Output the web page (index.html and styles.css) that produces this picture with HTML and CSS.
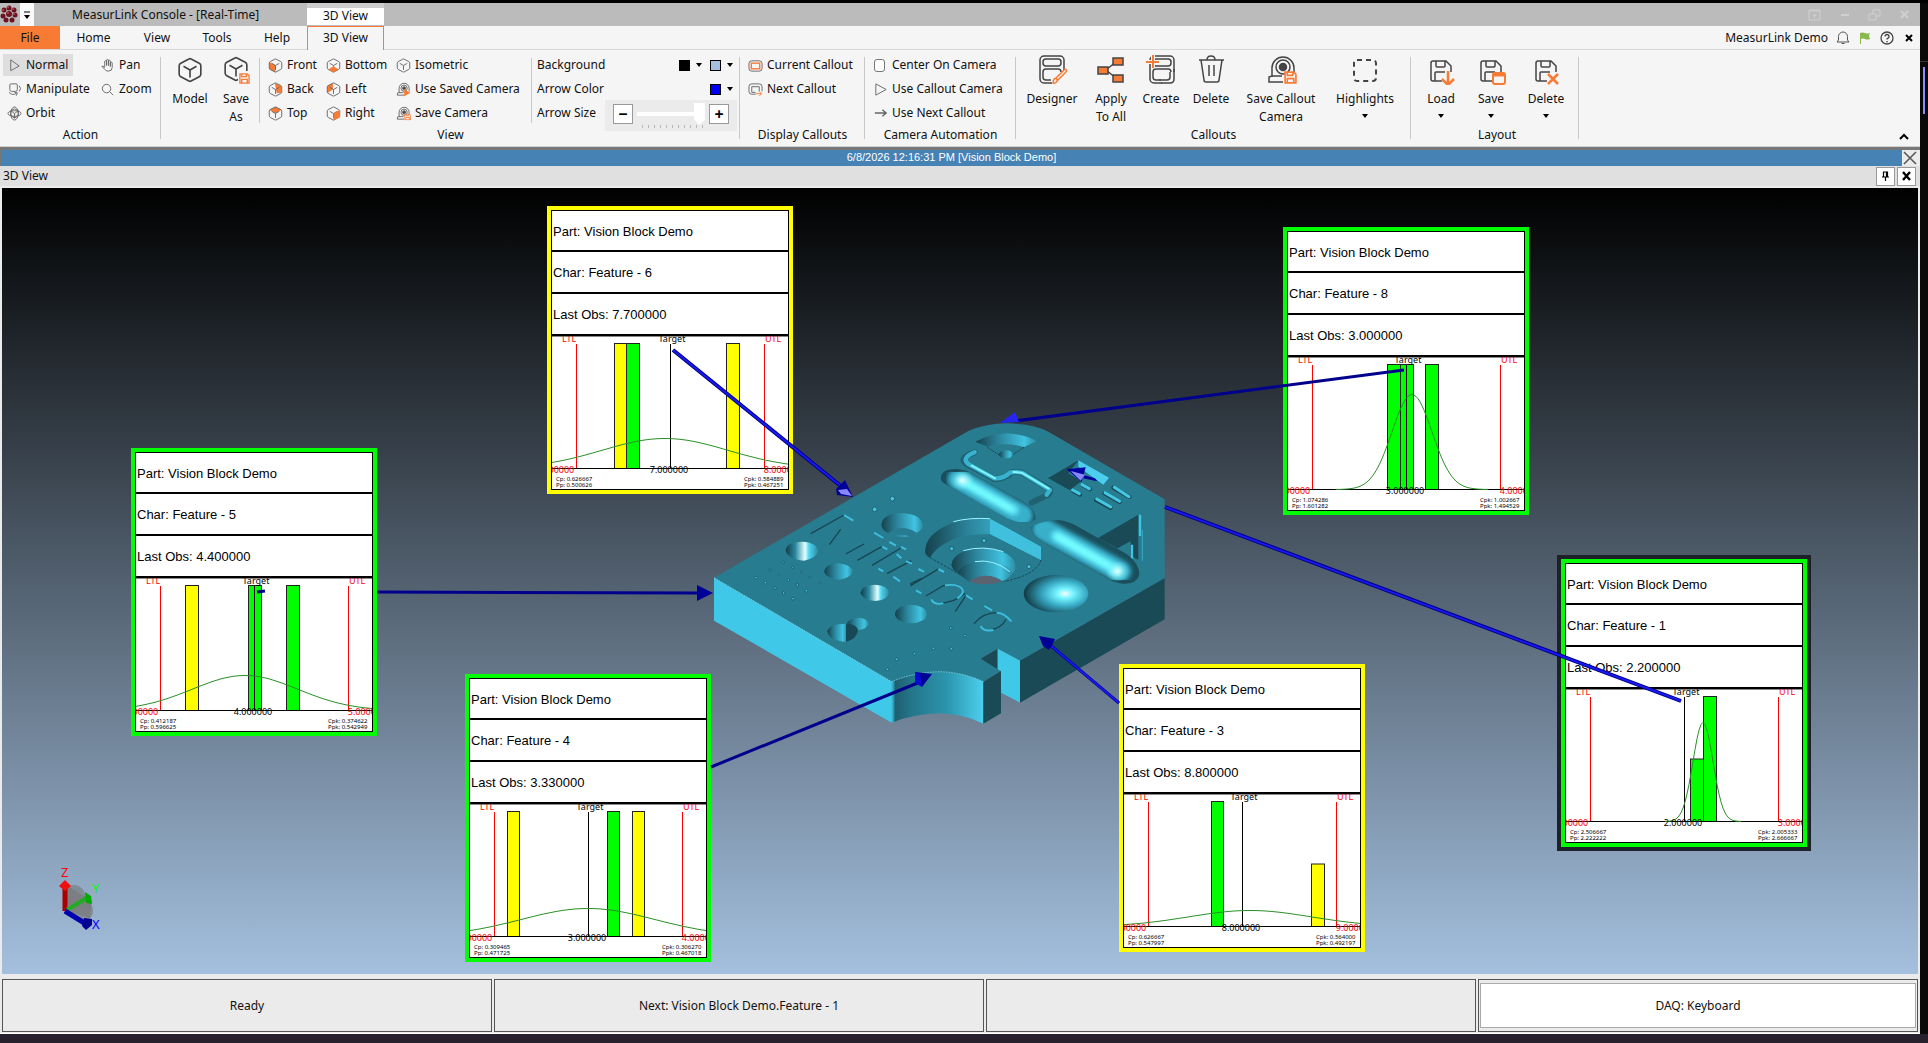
FILE: index.html
```html
<!DOCTYPE html>
<html lang="en">
<head>
<meta charset="utf-8">
<title>MeasurLink Console - [Real-Time]</title>
<link rel="stylesheet" href="styles.css">
</head>
<body>
<svg class="defs" aria-hidden="true">
  <symbol id="cube" viewBox="0 0 24 24"><path d="M11 1.8Q12 1.2 13 1.8L20.500 5.800Q22 6.600 22 8V16Q22 17.400 20.500 18.200L13 22.200Q12 22.800 11 22.200L3.500 18.200Q2 17.400 2 16V8Q2 6.600 3.500 5.800Z"/><path d="M6 8.500L12 12L18 8.500M12 12V19"/></symbol>
  <symbol id="camera" viewBox="0 0 24 24"><path d="M5 17V10a8 8 0 0 1 16 0v5M3 17h9M3 17l-1 4h11"/><circle cx="13" cy="10" r="5"/><circle cx="13" cy="10" r="2.500" fill="#444"/></symbol>
  <symbol id="disk" viewBox="0 0 24 24"><path d="M13 22H4a2 2 0 0 1-2-2V4a2 2 0 0 1 2-2h13l5 5v6M7 2v5a1 1 0 0 0 1 1h7a1 1 0 0 0 1-1V2M6 22v-8a1 1 0 0 1 1-1h9"/></symbol>
  <symbol id="form" viewBox="0 0 26 30"><path d="M13 28H5a4 4 0 0 1-4-4V5a4 4 0 0 1 4-4h16a4 4 0 0 1 4 4v12"/><rect x="4" y="4" width="18" height="7" rx="3"/><path d="M12 25H7a3 3 0 0 1-3-3v-5a3 3 0 0 1 3-3h12a3 3 0 0 1 3 3"/></symbol>
  <symbol id="floppy" viewBox="0 0 12 12"><path d="M1 1h8l2 2v8H1zM3 1v3h5V1M3 11V7h6v4" fill="#f5f5f5" stroke="#f77b35" stroke-width="1.500"/></symbol>
</svg>
<div class="app">
  <header class="titlebar">
    <svg class="logo" viewBox="0 0 18 18"><g fill="#6b1320"><circle cx="9" cy="3" r="2.500"/><circle cx="14" cy="5" r="2.500"/><circle cx="15" cy="10" r="2.500"/><circle cx="12" cy="15" r="2.500"/><circle cx="6" cy="15" r="2.500"/><circle cx="3" cy="11" r="2.500"/><circle cx="4" cy="5" r="2.500"/><circle cx="9" cy="9" r="3"/></g><g fill="#c0455a"><circle cx="8" cy="2" r="1"/><circle cx="13" cy="4" r="1"/><circle cx="14" cy="9" r="1"/><circle cx="8" cy="8" r="1"/><circle cx="3" cy="5" r="1"/></g></svg>
    <button class="quick" aria-label="Quick access"><svg viewBox="0 0 14 22"><path d="M4 8h6" stroke="#000"/><path d="M4 11h6l-3 4z" fill="#000"/></svg></button>
    <h1 class="title">MeasurLink Console - [Real-Time]</h1>
    <span class="context">3D View</span>
    <div class="winbtns">
      <button aria-label="Ribbon options"><svg viewBox="0 0 14 14"><path d="M1 2h11v10H1zM1 3h11M6.500 10V6M4.500 8l2-2 2 2"/></svg></button>
      <button aria-label="Minimize"><svg viewBox="0 0 14 14"><path d="M3 7h8" stroke-width="2"/></svg></button>
      <button aria-label="Restore"><svg viewBox="0 0 14 14"><path d="M1 6h7v6H1zM5 6V2h7v6H8"/></svg></button>
      <button aria-label="Close"><svg viewBox="0 0 14 14"><path d="M3 3l7 7M10 3l-7 7" stroke-width="2"/></svg></button>
    </div>
  </header>
  <nav class="tabs">
    <a class="tab file" href="#">File</a><a class="tab" href="#">Home</a><a class="tab" href="#">View</a><a class="tab" href="#">Tools</a><a class="tab" href="#">Help</a><a class="tab active" href="#">3D View</a>
    <div class="account"><span>MeasurLink Demo</span>
      <button aria-label="Notifications"><svg viewBox="0 0 14 14"><path d="M1 11h12l-1.500-2V5.500a4.500 4.500 0 0 0-9 0V9zM5.500 12.500h3" fill="none" stroke="#555"/></svg></button>
      <button aria-label="Status flag"><svg viewBox="0 0 14 14"><path d="M2 2q3-1 5 0t5 0l-1 3 1 3q-3 1-5 0T3 8v5H2z" fill="#8bb84a"/></svg></button>
      <button aria-label="Help"><svg viewBox="0 0 14 14"><circle cx="7" cy="7" r="6" fill="none" stroke="#444" stroke-width="1.300"/><path d="M5 5.500a2 2 0 1 1 3 1.700q-1 .5-1 1.300M7 10v1.300" fill="none" stroke="#444" stroke-width="1.400"/></svg></button>
      <button aria-label="Close view"><svg viewBox="0 0 14 14"><path d="M4 4l6 6M10 4l-6 6" stroke="#000" stroke-width="2"/></svg></button>
    </div>
  </nav>
  <section class="ribbon">
    <div class="group action">
      <div class="body">
        <div class="col c-action">
          <button class="cmd on"><svg class="ic" viewBox="0 0 16 16"><path d="M4 2l9 6.500-9 5z"/></svg>Normal</button>
          <button class="cmd"><svg class="ic" viewBox="0 0 16 16"><path d="M4 2h6q1 0 1 1v5q0 2-2 2H5q-2 0-2-2V3q0-1 1-1zM13 4q3 3 0 6M2 11q4 4 8 1M8 11l3 .5-1 3"/></svg>Manipulate</button>
          <button class="cmd"><svg class="ic" viewBox="0 0 16 16"><path d="M8 3l4 2v5l-4 3-4-3V5zM4 5l4 3 4-3M8 8v5"/><ellipse cx="8" cy="8" rx="7" ry="3"/><ellipse cx="8" cy="8" rx="4" ry="7"/></svg>Orbit</button>
        </div>
        <div class="col c-pan">
          <button class="cmd"><svg class="ic" viewBox="0 0 16 16"><path d="M5 9V3.500q1-1 2 0V8 2q1-1 2 0v6-5q1-1 2 0v6-4q1-1 2 0v5q0 4-4 4-3 0-4-2L2 9q1-1 3 1z"/></svg>Pan</button>
          <button class="cmd"><svg class="ic" viewBox="0 0 16 16"><circle cx="7" cy="7" r="4.500"/><path d="M10 10l4 4"/></svg>Zoom</button>
        </div>
      </div>
      <h2>Action</h2>
    </div>
    <div class="group view">
      <div class="body">
        <div class="bigs g-model">
          <button class="big"><svg viewBox="0 0 32 32"><use href="#cube" x="3" y="4" width="26" height="26"/></svg>Model</button>
          <button class="big"><svg viewBox="0 0 32 32"><use href="#cube" x="3" y="3" width="26" height="26"/><path d="M18 18h12v14H18z" fill="#f5f5f5" stroke="none"/><use href="#floppy" x="19" y="20" width="11" height="11"/></svg><span>Save<br>As</span></button>
        </div>
        <div class="col c-front">
          <button class="cmd"><svg class="ic" viewBox="0 0 24 24"><path class="o" d="M2 6l10 6v11L2 18z"/><use href="#cube"/></svg>Front</button>
          <button class="cmd"><svg class="ic" viewBox="0 0 24 24"><path class="o" d="M11 2l10 4v11l-7 1z"/><use href="#cube"/></svg>Back</button>
          <button class="cmd"><svg class="ic" viewBox="0 0 24 24"><path class="o" d="M12 1l10 5-10 6L2 6z"/><use href="#cube"/></svg>Top</button>
        </div>
        <div class="col c-bottom">
          <button class="cmd"><svg class="ic" viewBox="0 0 24 24"><use href="#cube"/><path class="o" d="M12 13l8 5-8 5-8-5z"/></svg>Bottom</button>
          <button class="cmd"><svg class="ic" viewBox="0 0 24 24"><path class="o" d="M2 6l9-4v10l-9 6z"/><use href="#cube"/></svg>Left</button>
          <button class="cmd"><svg class="ic" viewBox="0 0 24 24"><use href="#cube"/><path class="o" d="M12 12l10-6v12l-10 5z"/></svg>Right</button>
        </div>
        <div class="col c-iso">
          <button class="cmd"><svg class="ic" viewBox="0 0 24 24"><use href="#cube"/></svg>Isometric</button>
          <button class="cmd"><svg class="ic" viewBox="0 0 24 24"><use href="#camera"/><path class="o" d="M13 11l10 6-10 6z"/></svg>Use Saved Camera</button>
          <button class="cmd"><svg class="ic" viewBox="0 0 24 24"><use href="#camera"/><use href="#floppy" x="13" y="12" width="11" height="11"/></svg>Save Camera</button>
        </div>
        <div class="col c-colors">
          <div class="row"><span class="lbl">Background</span><button class="swatch black" aria-label="Background top color"></button><i class="caret"></i><button class="swatch sky" aria-label="Background bottom color"></button><i class="caret"></i></div>
          <div class="row"><span class="lbl">Arrow Color</span><button class="swatch blue" aria-label="Arrow color"></button><i class="caret"></i></div>
          <div class="row"><label class="lbl" for="size">Arrow Size</label>
            <div class="slider"><button aria-label="Smaller">−</button><div class="track"><input id="size" type="range" min="0" max="10" value="10"><div class="ticks"></div></div><button aria-label="Larger">+</button></div></div>
        </div>
      </div>
      <h2>View</h2>
    </div>
    <div class="group display">
      <div class="body"><div class="col">
        <button class="cmd"><svg class="ic" viewBox="0 0 16 16"><rect x="1" y="3" width="14" height="11" rx="3"/><rect x="3.500" y="5.500" width="9" height="6" stroke="#f77b35" stroke-width="1.500"/></svg>Current Callout</button>
        <button class="cmd"><svg class="ic" viewBox="0 0 16 16"><path d="M8 13H4q-3 0-3-3V5q0-3 3-3h8q3 0 3 3v5M8 11H4V5h8v5"/><path d="M8 12.500h6M12 10l2.500 2.500L12 15" stroke="#f77b35"/></svg>Next Callout</button>
      </div></div>
      <h2>Display Callouts</h2>
    </div>
    <div class="group auto">
      <div class="body"><div class="col">
        <label class="cmd"><input class="check" type="checkbox">Center On Camera</label>
        <button class="cmd"><svg class="ic" viewBox="0 0 16 16"><path d="M3 2l11 6-11 6z"/></svg>Use Callout Camera</button>
        <button class="cmd"><svg class="ic" viewBox="0 0 16 16"><path d="M2 7.500h12M10 4l4 3.500-4 3.500" stroke-width="1.500"/></svg>Use Next Callout</button>
      </div></div>
      <h2>Camera Automation</h2>
    </div>
    <div class="group callouts">
      <div class="body"><div class="bigs g-callouts">
        <button class="big"><svg viewBox="0 0 32 32"><use href="#form" x="3" y="2" width="26" height="30"/><path d="M17 30q0-4 3-5l9-9q3 1 0 4l-8 8q-1 3-4 2zM20 25l2 3" fill="#f5f5f5" stroke="#f77b35"/></svg>Designer</button>
        <button class="big"><svg viewBox="0 0 32 32"><path d="M11 17L22 8M11 17l11 9"/><g fill="#f77b35"><rect x="3" y="14" width="10" height="7"/><rect x="18" y="5" width="10" height="7"/><rect x="18" y="22" width="10" height="7"/></g></svg><span>Apply<br>To All</span></button>
        <button class="big"><svg viewBox="0 0 32 32"><use href="#form" x="4" y="2" width="26" height="30"/><path d="M16 30h9q4 0 4-4V16M14 27h8q3 0 3-3v-5"/><path d="M2 9h13M8 2v13" stroke="#f5f5f5" stroke-width="4"/><path d="M1 9h13M8 2v13" stroke="#f77b35" stroke-width="2"/></svg>Create</button>
        <button class="big"><svg viewBox="0 0 32 32"><path d="M4 7h25M6 7l3 20q0 2 2 2h11q2 0 2-2l3-20M12 7q0-4 4-4t4 4M14 12v11M19 12v11"/></svg>Delete</button>
        <button class="big"><svg viewBox="0 0 32 32"><path d="M7 24V15a11 11 0 0 1 22 0v4M7 23l-3 1v5h14M7 23h10"/><circle cx="18" cy="14" r="7"/><circle cx="18" cy="14" r="3.500" fill="#444"/><use href="#floppy" x="19" y="18" width="13" height="13"/></svg><span>Save Callout<br>Camera</span></button>
        <button class="big drop"><svg viewBox="0 0 32 32"><rect x="5" y="7" width="22" height="21" rx="3" stroke-dasharray="5 4" stroke-width="2"/></svg>Highlights<i class="caret"></i></button>
      </div></div>
      <h2>Callouts</h2>
    </div>
    <div class="group layout">
      <div class="body"><div class="bigs g-layout">
        <button class="big drop"><svg viewBox="0 0 32 32"><use href="#disk" x="4" y="6" width="24" height="24"/><path d="M23 18v13M17 26l6 6 6-6" stroke="#f77b35" stroke-width="2.500"/></svg>Load<i class="caret"></i></button>
        <button class="big drop"><svg viewBox="0 0 32 32"><use href="#disk" x="4" y="6" width="24" height="24"/><rect x="18" y="20" width="12" height="11" rx="2" fill="#f5f5f5" stroke="#f77b35" stroke-width="2"/><path d="M18 22h12" stroke="#f77b35" stroke-width="3"/></svg>Save<i class="caret"></i></button>
        <button class="big drop"><svg viewBox="0 0 32 32"><use href="#disk" x="4" y="6" width="24" height="24"/><path d="M18 21l10 10M28 21L18 31" stroke="#f77b35" stroke-width="2.500"/></svg>Delete<i class="caret"></i></button>
      </div></div>
      <h2>Layout</h2>
    </div>
    <button class="collapse" aria-label="Collapse ribbon"><svg viewBox="0 0 12 12"><path d="M2 8l4-4 4 4" fill="none" stroke="#000" stroke-width="2"/></svg></button>
  </section>
  <div class="docbar"><span>6/8/2026 12:16:31 PM [Vision Block Demo]</span><button aria-label="Close document"><svg viewBox="0 0 16 16"><path d="M2 2l12 12M14 2L2 14" stroke="#555" stroke-width="1.500"/></svg></button></div>
  <div class="panelbar"><span>3D View</span>
    <button aria-label="Pin"><svg viewBox="0 0 16 16"><path d="M5 9h7M6.500 9V4h4v5M9.500 4v5M8.500 9v4" fill="none" stroke="#000" stroke-width="1.200"/></svg></button>
    <button aria-label="Close panel"><svg viewBox="0 0 16 16"><path d="M5 4l7 8M12 4l-7 8" stroke="#000" stroke-width="2.400"/></svg></button></div>
  <main class="viewport">
    <svg class="model" viewBox="0 0 1440 990">
      <defs>
        <linearGradient id="cove"><stop offset="0" stop-color="#40c8e8"/><stop offset=".04" stop-color="#1d5f70"/><stop offset=".2" stop-color="#247488"/><stop offset=".6" stop-color="#2b95ae"/><stop offset="1" stop-color="#4ccfee"/></linearGradient>
        <linearGradient id="bore"><stop offset="0" stop-color="#16414c"/><stop offset=".35" stop-color="#2a8097"/><stop offset=".8" stop-color="#40c4e2"/><stop offset="1" stop-color="#2d8ba2"/></linearGradient>
        <linearGradient id="cone"><stop offset="0" stop-color="#123a45"/><stop offset=".3" stop-color="#2a8aa2"/><stop offset=".6" stop-color="#e4ffff"/><stop offset=".72" stop-color="#4fd6f2"/><stop offset="1" stop-color="#2d8ba2"/></linearGradient>
        <radialGradient id="ball" cx=".64" cy=".5" r=".62"><stop offset="0" stop-color="#efffff"/><stop offset=".22" stop-color="#73f3ff"/><stop offset=".55" stop-color="#37a9c4"/><stop offset="1" stop-color="#143f4a"/></radialGradient>
        <radialGradient id="shine"><stop offset="0" stop-color="#e8ffff"/><stop offset="1" stop-color="#76ffff" stop-opacity="0"/></radialGradient>
        <filter id="soft" x="-20%" y="-20%" width="140%" height="140%"><feGaussianBlur stdDeviation="7"/></filter>
        <clipPath id="pillA"><path d="M722 205Q724 177 768 177Q795 178 815 190L975 278Q1006 296 1007 327Q990 341 950 335L920 326L760 235Q722 220 722 205Z"/></clipPath>
        <clipPath id="pillB"><path d="M992 352Q1010 335 1075 330Q1105 334 1130 348L1280 432Q1320 462 1318 495Q1310 522 1270 521Q1248 520 1225 507L1040 404Q995 378 992 352Z"/></clipPath>
      </defs>
      <path fill="#287c90" d="M42 503L805 63Q860 40 920 40Q1000 42 1045 65L1394 268V505L960 752L893 716L842 746L903 783L850 815Q790 787 720 785Q640 787 575 815Z"/>
      <path fill="#40c8e8" d="M42 503L575 815V938L42 632Z"/>
      <path fill="url(#cove)" d="M575 815Q640 787 720 785Q790 787 850 815V941Q790 912 720 910Q640 912 575 938Z"/>
      <path fill="#194a56" d="M850 815L903 783V910L850 941ZM960 752L1394 505V628L960 878ZM842 746L893 716V778Z"/>
      <path fill="#40c8e8" d="M893 716L960 752V878L903 848V783L893 778Z"/>
      <path fill="none" stroke="#7fe6f8" stroke-width="2" stroke-dasharray="5 3" d="M42 503L575 815Q640 787 720 785Q790 787 850 815"/>
      <path fill="url(#bore)" d="M826 95Q870 72 920 70Q980 74 1010 94L972 111Q915 95 862 110Z"/><path fill="none" stroke="#174855" stroke-width="3" stroke-dasharray="6 3" d="M862 112L905 140M972 112L930 140"/><ellipse cx="918" cy="133" rx="21" ry="12" fill="url(#bore)"/>
      <g fill="none" stroke-linecap="round" stroke-linejoin="round"><path d="M824 127Q770 145 803 164L883 207Q910 208 935 187Q952 182 970 190L1050 238Q1052 252 1040 256L995 278" stroke="#1f6272" stroke-width="18"/><path d="M824 127Q780 145 808 164L883 205Q910 207 930 188Q950 182 970 190L1050 240L1040 254" stroke="#38b2ce" stroke-width="13"/><path d="M815 167L885 205M940 186L965 188L1046 236" stroke="#7ff6ff" stroke-width="6"/></g>
      <g clip-path="url(#pillA)"><path fill="#194f5c" d="M700 160H1020V350H700Z"/><g fill="none" filter="url(#soft)" stroke-linecap="round"><path d="M776 208L965 316" stroke="#38b0cc" stroke-width="66"/><path d="M786 212L940 300" stroke="#5fe9fb" stroke-width="30"/><path d="M800 222L930 296" stroke="#76ffff" stroke-width="16"/></g><ellipse cx="787" cy="211" rx="36" ry="30" fill="url(#shine)"/></g>
      <path fill="#194a56" d="M1194 384L1315 314V450L1280 430Z"/>
      <path fill="#287c90" d="M1252 415L1292 394V440Z"/>
      <path fill="none" stroke="#42c4e1" stroke-width="7" d="M1320 314V378M1296 404V446"/><path fill="none" stroke="#42c4e1" stroke-width="2" d="M1327 360V452"/>
      <g clip-path="url(#pillB)"><path fill="#194f5c" d="M980 320H1330V530H980Z"/><g fill="none" filter="url(#soft)" stroke-linecap="round"><path d="M1030 358L1260 484" stroke="#38b0cc" stroke-width="66"/><path d="M1070 378L1250 480" stroke="#5fe9fb" stroke-width="32"/><path d="M1075 382L1225 466" stroke="#76ffff" stroke-width="18"/></g><ellipse cx="1252" cy="484" rx="36" ry="32" fill="url(#shine)"/></g>
      <ellipse cx="1068" cy="551" rx="97" ry="56" fill="url(#ball)"/>
      <path fill="url(#bore)" d="M676 428Q672 375 750 342Q810 320 870 326L1023 410V450Q1005 440 870 372Q790 372 750 392Q705 414 690 443Q678 438 676 428Z"/><path fill="none" stroke="#174855" stroke-width="3" stroke-dasharray="8 4" d="M690 443L800 505M1023 450Q1010 495 910 515"/>
      <path fill="#40c0dd" d="M870 326L1023 410V450L870 372Z"/>
      <path fill="url(#bore)" d="M754 465Q760 418 850 414Q945 422 947 472Q945 487 934 491Q920 455 855 452Q790 455 770 487Q758 480 754 465Z"/><path fill="url(#bore)" d="M770 487Q792 454 855 452Q925 456 936 489Q935 500 908 513Q860 482 808 516Z"/><path fill="#5b6270" d="M806 514Q857 480 907 514Q857 532 806 514Z"/><path fill="none" stroke="#9af3ff" stroke-width="3" d="M760 335Q810 322 870 326M790 422Q850 405 910 425M825 455Q880 445 930 485"/>
      <path fill="url(#bore)" d="M544 345Q548 310 605 309Q665 312 669 347Q665 362 650 368Q605 340 565 369Q545 360 544 345ZM580 378Q605 370 628 379Q605 384 580 378Z"/>
      <path fill="url(#cone)" d="M257 423Q258 396 306 395Q352 397 354 424Q350 445 312 452Q265 447 257 423Z"/><path fill="url(#cone)" d="M481 548Q485 525 524 524Q564 526 567 548Q562 570 525 573Q488 570 481 548Z"/>
      <path fill="url(#bore)" d="M372 485Q376 461 415 460Q455 463 458 486Q452 503 418 509Q380 506 372 485Z"/>
      <ellipse cx="633" cy="612" rx="48" ry="28" fill="url(#bore)"/>
      <path fill="url(#bore)" d="M382 664Q385 642 440 641L438 695H430Q386 690 382 664Z"/><path fill="#174855" d="M438 643L474 640V661Q470 688 438 695Z"/><path fill="url(#bore)" d="M440 641Q445 624 480 623Q506 628 506 642Q500 658 474 661Q468 640 440 641Z"/>
      <path fill="#194a56" d="M1045 204L1135 151L1105 190L1145 213L1110 240Z"/><path fill="#4ccfee" d="M1135 151L1227 203L1210 224L1135 170Z"/><path fill="none" stroke="#174855" stroke-width="2" stroke-dasharray="6 3" d="M1045 204L1110 240"/>
      <g stroke="#174855" stroke-width="12" stroke-linecap="round"><path d="M1120 243l20 11M1148 226l22 12M1188 270l44 24M1213 250l46 26M1240 233l48 28"/></g>
      <g stroke="#43c8e5" stroke-width="9" stroke-linecap="round"><path d="M1118 240l20 11M1146 224l22 12M1190 267l42 24M1215 248l44 26M1243 232l44 28"/></g>
      <g fill="none" stroke="#164652" stroke-width="4"><path d="M332 371L432 315M422 358L388 404M437 432L492 402M472 451L545 410M516 466L603 414M561 491L634 452M632 527L717 476M678 558L728 528M798 556L766 604M822 641Q850 608 890 608M633 528V520L665 505M728 528Q755 520 778 527M710 580Q765 580 795 550M870 660Q905 655 918 628"/></g>
      <g fill="none" stroke="#3dbddc" stroke-width="6"><path d="M432 315L460 332M522 368L550 384M568 396L588 407M547 410L562 418M603 411L618 418M590 432L604 445M618 454L636 461M535 476L550 484M580 500L600 514M655 477L672 485M715 477L732 486M648 541L664 550M735 526Q780 520 788 540Q792 552 772 565M694 568Q700 585 730 580M798 556L818 568M853 588L876 601M890 608Q912 608 934 634M842 648Q850 666 880 660"/></g>
      <g fill="#3fc4e2" stroke="#174855" stroke-width="2"><circle cx="577" cy="266" r="7"/><circle cx="524" cy="298" r="7"/><circle cx="755" cy="416" r="6"/><circle cx="852" cy="392" r="6"/><circle cx="987" cy="470" r="6"/><circle cx="250" cy="457" r="3"/><circle cx="278" cy="472" r="3"/><circle cx="304" cy="486" r="3"/><circle cx="330" cy="502" r="3"/><circle cx="360" cy="518" r="3"/><circle cx="210" cy="480" r="3"/><circle cx="237" cy="495" r="3"/><circle cx="265" cy="510" r="4"/><circle cx="292" cy="525" r="4"/><circle cx="319" cy="542" r="4"/><circle cx="168" cy="503" r="4"/><circle cx="196" cy="518" r="4"/><circle cx="225" cy="534" r="4"/><circle cx="251" cy="549" r="4"/><circle cx="279" cy="566" r="4"/><circle cx="752" cy="654" r="4"/><circle cx="795" cy="677" r="4"/><circle cx="700" cy="715" r="4"/><circle cx="754" cy="716" r="4"/><circle cx="643" cy="731" r="4"/><circle cx="590" cy="748" r="4"/><circle cx="562" cy="778" r="4"/></g>
      <path fill="#00009a" d="M1192 214L1150 205L1150 195L1185 205Z"/><path fill="#0000a4" d="M1100 178L1157 172L1145 216Z"/><path fill="#8886f8" d="M1112 183L1155 194L1142 212Z"/>
    </svg>
    <svg class="axes" viewBox="0 0 50 80">
      <g fill="#777" fill-opacity=".6"><circle cx="24" cy="35" r="11"/><circle cx="32" cy="50" r="11"/><path d="M16 24L16 50L40 57L42 40Z"/></g>
      <path d="M15 50V26" stroke="#a00" stroke-width="5"/><path d="M15 19l6 6-6 5-6-5z" fill="#f01010"/>
      <path d="M17 49L38 36" stroke="#2a2" stroke-width="4"/><path d="M35 31l6 4 1 8-6-1z" fill="#0a0"/>
      <path d="M15 50L36 63" stroke="#0000b0" stroke-width="5"/><path d="M34 57l8 1v6l-6 5-4-4z" fill="#000090"/>
      <text x="11" y="16" fill="#f00">Z</text><text x="42" y="32" fill="#0f0">Y</text><text x="42" y="68" fill="#00f">X</text>
    </svg>
    <article class="card warn p6"><p>Part: Vision Block Demo</p><p>Char: Feature - 6</p><p>Last Obs: 7.700000</p>
      <svg class="chart" viewBox="0 0 236 153" data-target="7" data-curve="113,63,30" data-bars="62,12,y,1;74,13,g,1;174,13,y,1" data-cap="0.626667,0.500626,0.584889,0.467251"></svg></article>
    <article class="card p8"><p>Part: Vision Block Demo</p><p>Char: Feature - 8</p><p>Last Obs: 3.000000</p>
      <svg class="chart" viewBox="0 0 236 153" data-target="3" data-curve="124,20,95" data-bars="99,13,g,1;112,13,g,1;137,13,g,1" data-cap="1.074286,1.601282,1.002667,1.494529"></svg></article>
    <article class="card p5"><p>Part: Vision Block Demo</p><p>Char: Feature - 5</p><p>Last Obs: 4.400000</p>
      <svg class="chart" viewBox="0 0 236 153" data-target="4" data-curve="109,53,35" data-bars="49,13,y,1;112,13,g,1;150,13,g,1" data-cap="0.412187,0.596625,0.374622,0.542949"></svg></article>
    <article class="card p4"><p>Part: Vision Block Demo</p><p>Char: Feature - 4</p><p>Last Obs: 3.330000</p>
      <svg class="chart" viewBox="0 0 236 153" data-target="3" data-curve="118,67,28" data-bars="37,12,y,1;137,12,g,1;162,12,y,1" data-cap="0.309465,0.471725,0.306270,0.467018"></svg></article>
    <article class="card warn p3"><p>Part: Vision Block Demo</p><p>Char: Feature - 3</p><p>Last Obs: 8.800000</p>
      <svg class="chart" viewBox="0 0 236 153" data-target="8" data-curve="126,61,16" data-bars="87,12,g,1;187,13,y,0.5" data-cap="0.626667,0.547997,0.564000,0.492197"></svg></article>
    <article class="card selected p1"><p>Part: Vision Block Demo</p><p>Char: Feature - 1</p><p>Last Obs: 2.200000</p>
      <svg class="chart" viewBox="0 0 236 153" data-target="2" data-curve="137,10,99" data-bars="124,13,g,0.5;137,13,g,1" data-cap="2.506667,2.222222,2.005333,2.666667"></svg></article>
    <svg class="arrows" viewBox="2 188 1916 786">
      <g stroke="#000088" stroke-width="4"><path d="M673 350L842 487M1681 701L1165 507"/></g>
      <g stroke="#00008c" stroke-width="3"><path d="M1404 370L1015 421M377 592L698 593M711 767L920 682M1119 703L1050 645M257 592L265 591"/></g>
      <g stroke="#1818f0" stroke-width="2"><path d="M673 350L842 487M1681 701L1165 507M1119 703L1050 645"/></g>
      <g fill="#000096"><path d="M853 497L845 480L836 489L837 495ZM713 593L697 585V601ZM932 674L915 672L922 687ZM1039 636L1055 639L1052 645L1049 650L1043 646Z"/><path fill="#2626f0" d="M1000 423L1015 412L1019 422Z"/><path fill="#0a0ad8" d="M915 672L920 674L922 687L915 683Z"/><path fill="#8886f8" d="M838 490L847 489L852 496L841 494Z"/></g>
    </svg>
  </main>
  <footer class="status"><div>Ready</div><div>Next: Vision Block Demo.Feature - 1</div><div></div><div class="daq"><button>DAQ: Keyboard</button></div></footer>
</div>
<aside class="desktop"></aside>
<script src="script.js"></script>
</body>
</html>
```
FILE: styles.css
```css
* { box-sizing: border-box; }
body { margin: 0; min-height: 100vh; padding: 3px 0 9px; display: flex; background: linear-gradient(#000 0 3px, #090909 3px calc(100% - 9px), #27212d calc(100% - 9px)); font: 12px/18px "Noto Sans", "Open Sans", sans-serif; color: #111; }
button, input { font: inherit; color: inherit; margin: 0; }
button { padding: 0; border: 0; background: none; }
h1, h2, p { margin: 0; font-size: 12px; font-weight: 400; }
a { color: inherit; text-decoration: none; }
svg { display: block; }
.defs { position: absolute; width: 0; height: 0; }
.app { flex: 1; min-width: 0; display: flex; flex-direction: column; background: #ebebeb; border-bottom: 1px solid #fff; }
.desktop { width: 8px; background: linear-gradient(#8c8cff, #8c8cff) 3px 64px / 2px 47px no-repeat, linear-gradient(#333, #333) 0 58px / 8px 1px no-repeat; }

.titlebar { height: 23px; display: flex; background: #bbb; }
.logo { width: 18px; height: 18px; margin: 2px 2px 0 0; }
.quick { width: 14px; background: #fafafa; }
.quick svg { width: 14px; height: 22px; }
.title { width: 235px; margin-left: 38px; line-height: 24px; }
.context { width: 77px; border-top: 5px solid #ccc; background: #fff; text-align: center; height: 22px; line-height: 16px; }
.winbtns { margin-left: auto; display: flex; align-items: center; gap: 16px; padding-right: 8px; }
.winbtns svg { width: 14px; height: 14px; fill: none; stroke: #d0d0d0; }

.tabs { height: 24px; display: flex; background: #f5f5f5; border-bottom: 1px solid #d8d8d8; }
.tab { width: 60px; text-align: center; line-height: 23px; }
.tab:nth-child(2) { width: 67px; }
.tab.file { background: #f77b35; }
.tab.active { width: 77px; height: 24px; background: #f5f5f5; border: 1px solid #f77b35; border-bottom: 0; line-height: 21px; }
.account { margin-left: auto; display: flex; align-items: center; gap: 8px; padding-right: 4px; }
.account svg { width: 14px; height: 14px; }

.ribbon { height: 97px; display: flex; background: #f5f5f5; position: relative; border-bottom: 1px solid #d0d0d0; }
.group { display: flex; flex-direction: column; position: relative; padding-top: 3px; }
.group::after { content: ""; position: absolute; right: 0; top: 7px; height: 82px; border-right: 1px solid #c8c8c8; }
.group h2 { text-align: center; line-height: 20px; }
.body { height: 72px; display: flex; }
.action { width: 161px; }
.view { width: 579px; }
.display { width: 125px; padding-left: 8px; }
.auto { width: 151px; padding-left: 8px; }
.callouts { width: 395px; padding-left: 8px; }
.layout { width: 168px; padding-left: 4px; }
.display h2, .auto h2, .callouts h2 { margin-left: -8px; }
.col { display: flex; flex-direction: column; }
.cmd { height: 24px; display: flex; align-items: center; gap: 4px; white-space: nowrap; }
.ic { width: 15px; height: 15px; fill: none; stroke: #666; flex: none; }
.ic[viewBox="0 0 24 24"] { stroke-width: 1.500; }
.o { fill: #f77b35; stroke: none; }
.c-action { width: 100px; padding-left: 3px; }
.c-action .cmd { padding-left: 4px; }
.cmd.on { width: 70px; height: 22px; margin: 1px 0; background: #dedede; }
.bigs { display: grid; }
.g-model { grid-template-columns: 52px 40px; padding-left: 3px; width: 99px; position: relative; }
.g-model::after { content: ""; position: absolute; right: 0; top: 5px; height: 65px; border-right: 1px solid #c8c8c8; }
.g-callouts { grid-template-columns: 56px 62px 38px 62px 78px 90px; }
.g-layout { grid-template-columns: 52px 48px 62px; }
.big { display: flex; flex-direction: column; align-items: center; justify-content: flex-start; line-height: 18px; white-space: nowrap; }
.big svg { width: 32px; height: 32px; margin-bottom: 5px; flex: none; fill: none; stroke: #444; stroke-width: 1.500; }
.c-front { width: 58px; padding-left: 8px; }
.c-bottom { width: 70px; padding-left: 8px; }
.c-iso { width: 144px; padding-left: 8px; position: relative; }
.c-iso::after { content: ""; position: absolute; right: 0; top: 5px; height: 65px; border-right: 1px solid #c8c8c8; }
.c-colors { flex: 1; padding: 0 3px 0 5px; }
.row { height: 24px; display: flex; align-items: center; }
.lbl { margin-right: auto; }
.swatch { width: 11px; height: 11px; border: 1px solid #000; }
.black { background: #000; }
.sky { background: #a4c0de; }
.blue { background: #0000f5; }
.caret { width: 6px; height: 4px; margin: 0 8px 0 6px; background: #000; clip-path: polygon(0 0, 100% 0, 50% 100%); }
.row .caret:last-child { margin-right: 4px; }
.drop .caret { margin: 6px 0 0; }
.slider { display: flex; align-items: center; gap: 4px; width: 132px; height: 31px; padding: 0 8px 4px; background: #ebebeb; margin-top: 5px; }
.slider > button { width: 20px; height: 20px; border: 1px solid #999; background: #fff; font-weight: 700; font-size: 16px; line-height: 16px; color: #000; flex: none; }
.track { flex: 1; min-width: 0; padding-top: 4px; }
.track input { display: block; width: 100%; height: 22px; appearance: none; background: linear-gradient(#fff, #fff) 0 50% / 100% 4px no-repeat; }
.track input::-webkit-slider-thumb { appearance: none; width: 11px; height: 22px; background: #fff; clip-path: polygon(0 0, 100% 0, 100% 75%, 50% 100%, 0 75%); }
.ticks { height: 3px; margin-left: 5px; background: repeating-linear-gradient(90deg, #b8b8b8 0 1px, transparent 1px 6px); }
.check { appearance: none; width: 11px; height: 13px; margin: 0 3px 0 1px; border: 1px solid #777; border-radius: 3px; background: #fff; }
.collapse { position: absolute; right: 10px; bottom: 3px; }
.collapse svg { width: 12px; height: 12px; }

.docbar { height: 19px; display: flex; border-top: 3px solid #777; background: #4682b4; color: #fff; font: 11px/15px "Liberation Sans", Arial, sans-serif; border-left: 1px solid #777; }
.docbar span { flex: 1; text-align: center; }
.docbar button { width: 18px; background: #ebebeb; }
.docbar svg { width: 16px; height: 16px; }
.panelbar { height: 22px; display: flex; align-items: center; gap: 2px; padding: 0 4px 0 3px; background: #e0e0e0; border-bottom: 2px solid #ebebeb; }
.panelbar span { margin-right: auto; }
.panelbar button { width: 19px; height: 19px; border: 1px solid #999; background: #fff; }
.panelbar svg { width: 16px; height: 16px; }

.viewport { flex: 1; position: relative; overflow: hidden; margin: 0 2px; min-height: 786px; background: linear-gradient(#000, #a4c0de); }
.model { position: absolute; left: 698px; top: 222px; width: 480px; height: 330px; }
.axes { position: absolute; left: 48px; top: 673px; width: 50px; height: 80px; font-size: 13px; }
.arrows { position: absolute; left: 0; top: 0; width: 1916px; height: 786px; fill: none; }
.card { position: absolute; width: 246px; border: 4px solid #0f0; background: #fff; color: #000; outline: 1px solid #000; outline-offset: -5px; padding: 1px; font: 13px/40px "Liberation Sans", Arial, sans-serif; }
.card.warn { border-color: #ff0; }
.card.selected { box-shadow: 0 0 0 4px #1c2228; }
.card p { height: 42px; font-size: 13px; line-height: 41px; padding-left: 1px; border-bottom: 2px solid #000; }
.card p:first-child { height: 41px; }
.chart { width: 236px; height: 153px; font: 9px "Noto Sans", sans-serif; }
.chart .cap { font-size: 6px; }
.chart .limit { stroke: #f00; }
.chart .red { fill: #f00; }
.chart .mid { text-anchor: middle; }
.chart .line { stroke: #000; }
.chart .edge { stroke: #888; }
.chart .bar { stroke: #222; }
.chart .g { fill: #0f0; }
.chart .y { fill: #ff0; }
.chart .curve { fill: none; stroke: #2a9028; }
.p6 { left: 545px; top: 18px; }
.p8 { left: 1281px; top: 39px; }
.p5 { left: 129px; top: 260px; }
.p4 { left: 463px; top: 486px; }
.p3 { left: 1117px; top: 476px; }
.p1 { left: 1559px; top: 371px; }

.status { display: grid; grid-template-columns: 490fr 490fr 490fr 440fr; gap: 2px; padding: 5px 2px 1px; background: #ebebeb; height: 59px; }
.status > div { border: 1px solid #555; display: flex; align-items: center; justify-content: center; }
.status .daq { padding: 3px 1px; }
.daq button { flex: 1; align-self: stretch; border: 1px solid #aaa; background: #fff; }
```
FILE: script.js
```js
// Draws each callout histogram: spec limits, bars, normal curve and capability values.
const BASE = 132.5, TOP = 7.5;
document.querySelectorAll('.chart').forEach(svg => {
  const target = Number(svg.dataset.target);
  const [mean, sigma, height] = svg.dataset.curve.split(',').map(Number);
  const [cp, pp, cpk, ppk] = svg.dataset.cap.split(',');
  let out = '<path class="edge" d="M0 .5H236"/>';
  svg.dataset.bars.split(';').forEach(bar => {
    const [x, w, color, share] = bar.split(',');
    const h = (BASE - TOP) * share;
    out += `<rect class="bar ${color}" x="${+x + 0.5}" y="${BASE - h}" width="${w}" height="${h}"/>`;
  });
  out += `<path class="limit" d="M24.5 8V132M212.5 8V132"/><path class="line" d="M118.5 8V132M0 132.5H236"/>`;
  let d = '';
  for (let x = Math.max(0, mean - 3.8 * sigma); x <= Math.min(236, mean + 3.8 * sigma); x += 2) {
    const y = BASE - height * Math.exp(-((x - mean) ** 2) / (2 * sigma * sigma));
    d += (d ? 'L' : 'M') + x.toFixed(1) + ' ' + y.toFixed(1);
  }
  out += `<path class="curve" d="${d}"/>`;
  out += `<text class="red" x="10" y="6">LTL</text><text class="mid" x="120" y="6">Target</text><text class="red" x="213" y="6">UTL</text>`;
  out += `<text class="red mid" x="3" y="137">${(target - 1).toFixed(6)}</text><text class="mid" x="117" y="137">${target.toFixed(6)}</text><text class="red mid" x="231" y="137">${(target + 1).toFixed(6)}</text>`;
  out += `<g class="cap"><text x="4" y="145">Cp: ${cp}</text><text x="4" y="151">Pp: ${pp}</text><text x="192" y="145">Cpk: ${cpk}</text><text x="192" y="151">Ppk: ${ppk}</text></g>`;
  svg.innerHTML = out;
});
```
